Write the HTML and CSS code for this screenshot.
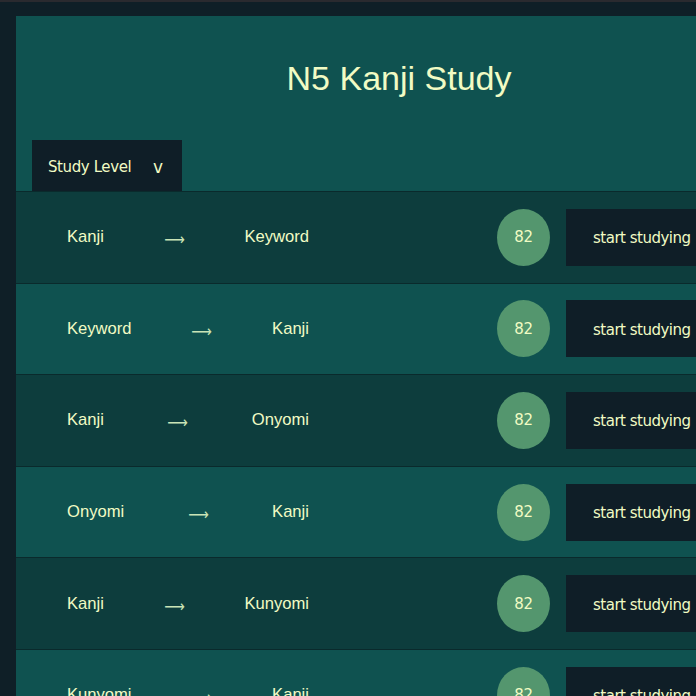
FILE: index.html
```html
<!DOCTYPE html>
<html lang="en">
<head>
<meta charset="utf-8">
<title>N5 Kanji Study</title>
<link rel="stylesheet" href="styles.css">
</head>
<body>
<main class="panel">
  <h1 class="title">N5 Kanji Study</h1>
  <div class="level"><span>Study Level</span><span class="caret">v</span></div>
  <ul class="rows">
    <li class="row"><div class="pair"><span>Kanji</span><span class="arrow">⟶</span><span>Keyword</span></div><span class="count">82</span><button class="start">start studying</button></li>
    <li class="row"><div class="pair"><span>Keyword</span><span class="arrow">⟶</span><span>Kanji</span></div><span class="count">82</span><button class="start">start studying</button></li>
    <li class="row"><div class="pair"><span>Kanji</span><span class="arrow">⟶</span><span>Onyomi</span></div><span class="count">82</span><button class="start">start studying</button></li>
    <li class="row"><div class="pair"><span>Onyomi</span><span class="arrow">⟶</span><span>Kanji</span></div><span class="count">82</span><button class="start">start studying</button></li>
    <li class="row"><div class="pair"><span>Kanji</span><span class="arrow">⟶</span><span>Kunyomi</span></div><span class="count">82</span><button class="start">start studying</button></li>
    <li class="row"><div class="pair"><span>Kunyomi</span><span class="arrow">⟶</span><span>Kanji</span></div><span class="count">82</span><button class="start">start studying</button></li>
  </ul>
</main>
</body>
</html>
```
FILE: styles.css
```css
html { overflow: hidden; background: #0f1f27; }
body {
  margin: 0;
  border-top: 2px solid #2a2a2f;
  padding: 14px 0 0 16px;
  background: #0f1f27;
  color: #f1fbc4;
  font-family: "Liberation Sans", Arial, sans-serif;
}
.panel {
  width: 766px;
  background: #0f5250;
}
.title {
  margin: 0;
  padding: 42px 0 42px;
  font-size: 34px;
  line-height: 40px;
  font-weight: normal;
  text-align: center;
}
.level {
  margin-left: 16px;
  width: 150px;
  height: 51px;
  box-sizing: border-box;
  padding: 2px 19px 0 16px;
  display: flex;
  align-items: center;
  justify-content: space-between;
  background: #0f1e27;
  font-family: "DejaVu Sans", sans-serif;
  font-size: 15px;
  letter-spacing: -0.4px;
}
.caret { font-size: 17px; letter-spacing: 0; }
.rows { list-style: none; margin: 0; padding: 0; border-top: 1px solid #0a2a2c; }
.row {
  display: flex;
  align-items: center;
  height: 90.6px;
  padding-left: 51px;
  border-bottom: 1px solid #0a2a2c;
  background: #0f5250;
}
.row:nth-child(odd) { background: #0d3d3d; }
.pair {
  width: 242px;
  display: flex;
  justify-content: space-between;
  align-items: center;
  font-size: 16.6px;
}
.arrow {
  margin-top: 5px;
  color: #c9e4b6;
  font-family: "DejaVu Sans", sans-serif;
  font-size: 16px;
  transform: scaleX(0.9);
}
.count {
  margin-left: 188px;
  width: 53px;
  height: 57px;
  border-radius: 50%;
  background: #54966e;
  display: flex;
  align-items: center;
  justify-content: center;
  font-family: "DejaVu Sans", sans-serif;
  font-size: 15px;
  letter-spacing: -0.4px;
}
.start {
  margin-left: 16px;
  width: 160px;
  height: 57px;
  border: 0;
  padding: 2px 0 0 27px;
  text-align: left;
  background: #0f1e27;
  color: #f1fbc4;
  font-family: "DejaVu Sans", sans-serif;
  font-size: 15px;
  letter-spacing: -0.5px;
}
```
